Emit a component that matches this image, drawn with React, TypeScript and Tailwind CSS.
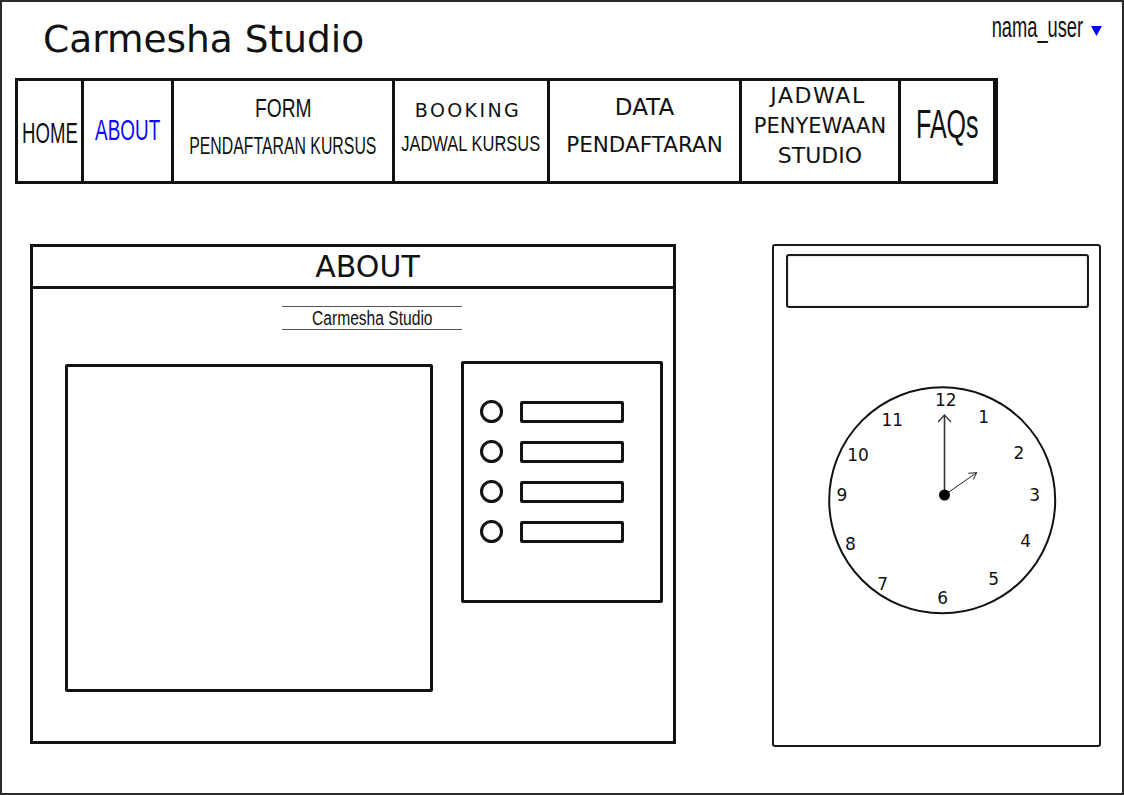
import React from 'react';

const dv = "font-['DejaVu_Sans',Verdana,sans-serif]";
const narrow = "font-['Liberation_Sans',Arial,sans-serif]";

const clockNumbers: [string, number, number][] = [
  ['12', 945.7, 399.7],
  ['1', 983.7, 416.7],
  ['2', 1019, 453],
  ['3', 1034.7, 495],
  ['4', 1025.7, 541],
  ['5', 993.7, 579],
  ['6', 942.7, 598.3],
  ['7', 882.7, 583.7],
  ['8', 850.3, 543.7],
  ['9', 842, 495.3],
  ['10', 858, 455],
  ['11', 892.3, 420],
];

function Clock() {
  return (
    <svg width="240" height="240" viewBox="822 380 240 240" className="block">
      <circle cx="942.2" cy="500.3" r="113" fill="white" stroke="#111" strokeWidth="2" />
      {clockNumbers.map(([n, x, y]) => (
        <text
          key={n}
          x={x}
          y={y}
          textAnchor="middle"
          dominantBaseline="central"
          fontFamily="DejaVu Sans, Verdana, sans-serif"
          fontSize="17"
          fill="#111"
        >
          {n}
        </text>
      ))}
      <line x1="944.5" y1="495" x2="944.5" y2="415" stroke="#333" strokeWidth="1.6" />
      <polyline points="938,422 944.5,415 951,422" fill="none" stroke="#333" strokeWidth="1.2" />
      <line x1="944.5" y1="495" x2="976.7" y2="472.7" stroke="#222" strokeWidth="1" />
      <polyline points="968.3,473.3 976.7,472.7 973.3,479.5" fill="none" stroke="#222" strokeWidth="1" />
      <circle cx="944.5" cy="495" r="5.5" fill="#000" />
    </svg>
  );
}

export default function App() {
  return (
    <div className="w-[1124px] h-[795px] border-2 border-[#2a2a2a] bg-white text-[#111] overflow-hidden">
      {/* header */}
      <div className="flex justify-between items-start h-[76px]">
        <h1 className={`${dv} ml-[41px] mt-[19px] text-[37.5px] leading-[37px]`}>Carmesha Studio</h1>
        <div className="mt-[11px] mr-[20px] flex items-start gap-[8px]">
          <span className={`${narrow} block whitespace-nowrap text-[29px] leading-[29px] scale-x-[0.63] origin-right`}>
            nama_user
          </span>
          <svg width="11" height="10" viewBox="0 0 11 10" className="mt-[13px]">
            <polygon points="0,0 11,0 5.5,10" fill="#0000ff" />
          </svg>
        </div>
      </div>

      {/* nav */}
      <nav className="ml-[13px] flex w-max h-[106px] border-[3px] border-r-[5px] border-[#111]">
        <div className="w-[66px] border-r-[3px] border-[#111] flex flex-col items-center pt-[32px]">
          <span className={`${narrow} block whitespace-nowrap text-[30px] leading-[40px] scale-x-[0.62]`}>HOME</span>
        </div>
        <div className="w-[90px] border-r-[3px] border-[#111] flex flex-col items-center pt-[29px]">
          <span className={`${narrow} block whitespace-nowrap text-[30px] leading-[40px] scale-x-[0.63] text-[#0a0aff]`}>
            ABOUT
          </span>
        </div>
        <div className="w-[221px] border-r-[3px] border-[#111] flex flex-col items-center pt-[8px]">
          <span className={`${narrow} block whitespace-nowrap text-[26px] leading-[38px] scale-x-[0.74]`}>FORM</span>
          <span className={`${narrow} block whitespace-nowrap text-[24px] leading-[38px] scale-x-[0.66]`}>
            PENDAFTARAN KURSUS
          </span>
        </div>
        <div className="w-[155px] border-r-[3px] border-[#111] flex flex-col items-center pt-[12px]">
          <span className={`${dv} block whitespace-nowrap text-[19px] leading-[34px] tracking-[2.4px] pr-[6px]`}>BOOKING</span>
          <span className={`${narrow} block whitespace-nowrap text-[22px] leading-[34px] scale-x-[0.75]`}>
            JADWAL KURSUS
          </span>
        </div>
        <div className="w-[192px] border-r-[3px] border-[#111] flex flex-col items-center pt-[7px]">
          <span className={`${dv} block whitespace-nowrap text-[23px] leading-[38px]`}>DATA</span>
          <span className={`${dv} block whitespace-nowrap text-[21.5px] leading-[38px]`}>PENDAFTARAN</span>
        </div>
        <div className="w-[159px] border-r-[3px] border-[#111] flex flex-col items-center">
          <span className={`${dv} block whitespace-nowrap text-[22px] leading-[30px] tracking-[1.6px] pr-[4px]`}>JADWAL</span>
          <span className={`${dv} block whitespace-nowrap text-[21px] leading-[30px]`}>PENYEWAAN</span>
          <span className={`${dv} block whitespace-nowrap text-[22px] leading-[30px]`}>STUDIO</span>
        </div>
        <div className="w-[92px] flex flex-col items-center pt-[21px]">
          <span className={`${narrow} block whitespace-nowrap text-[41px] leading-[44px] scale-x-[0.61]`}>FAQs</span>
        </div>
      </nav>

      {/* content */}
      <div className="ml-[28px] mt-[60px] flex items-start gap-[96px]">
        <section className="w-[646px] h-[500px] border-[3px] border-[#111]">
          <div className={`${dv} h-[42px] border-b-[3px] border-[#111] flex items-center justify-center pl-[29px] text-[30px] leading-[39px]`}>
            ABOUT
          </div>
          <div className="ml-[249px] mt-[17px] w-[180px] h-[24px] border-y border-[#555] flex justify-center">
            <span className={`${narrow} block whitespace-nowrap text-[20px] leading-[22px] scale-x-[0.78]`}>
              Carmesha Studio
            </span>
          </div>
          <div className="ml-[32px] mt-[31px] flex items-start gap-[28px]">
            <div className="mt-[3px] w-[368px] h-[328px] border-[3px] border-[#111] rounded-[2px]" />
            <div className="w-[202px] h-[242px] border-[3px] border-[#111] rounded-[2px] pt-[36px] pl-[16px] flex flex-col gap-[17px]">
              {[0, 1, 2, 3].map((i) => (
                <div key={i} className="flex items-center gap-[17px]">
                  <div className="w-[23px] h-[23px] rounded-full border-[3px] border-[#111]" />
                  <div className="w-[104px] h-[22px] border-[3px] border-[#111] rounded-[2px]" />
                </div>
              ))}
            </div>
          </div>
        </section>

        <aside className="w-[329px] h-[503px] border-2 border-[#1a1a1a] rounded-[3px]">
          <div className="ml-[12px] mt-[8px] w-[303px] h-[54px] border-2 border-[#1a1a1a] rounded-[3px] shadow-[inset_0_0_2px_rgba(0,0,0,0.25)]" />
          <div className="ml-[48px] mt-[72px]">
            <Clock />
          </div>
        </aside>
      </div>
    </div>
  );
}
